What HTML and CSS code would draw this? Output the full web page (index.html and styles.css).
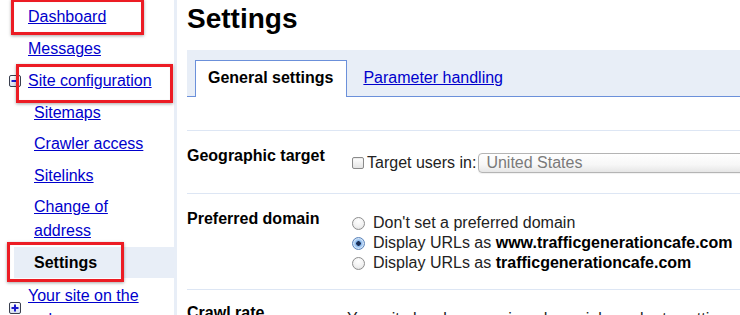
FILE: index.html
```html
<!DOCTYPE html>
<html lang="en">
<head>
<meta charset="utf-8">
<title>Settings</title>
<link rel="stylesheet" href="styles.css">
</head>
<body>
<div class="page">
  <nav class="sidebar">
    <ul class="nav">
      <li class="nav-item"><a href="#">Dashboard</a></li>
      <li class="nav-item"><a href="#">Messages</a></li>
      <li class="nav-group group-config">
        <div class="nav-item has-toggle">
          <span class="toggle">
            <svg width="12" height="12" viewBox="0 0 12 12">
              <defs><linearGradient id="tg1" x1="0" y1="0" x2="0" y2="1"><stop offset="0" stop-color="#ffffff"/><stop offset="1" stop-color="#d6deee"/></linearGradient></defs>
              <rect x="0.5" y="0.5" width="11" height="11" rx="1.5" fill="url(#tg1)" stroke="#3a3f4f"/>
              <rect x="2.5" y="5" width="7" height="2" fill="#1a1acc"/>
            </svg>
          </span>
          <a href="#">Site configuration</a>
        </div>
        <ul class="subnav">
          <li class="sub-item"><a href="#">Sitemaps</a></li>
          <li class="sub-item"><a href="#">Crawler access</a></li>
          <li class="sub-item"><a href="#">Sitelinks</a></li>
          <li class="sub-item"><a href="#">Change of address</a></li>
          <li class="sub-item current">Settings</li>
        </ul>
      </li>
      <li class="nav-group group-web">
        <div class="nav-item has-toggle">
          <span class="toggle">
            <svg width="12" height="12" viewBox="0 0 12 12">
              <defs><linearGradient id="tg2" x1="0" y1="0" x2="0" y2="1"><stop offset="0" stop-color="#ffffff"/><stop offset="1" stop-color="#d6deee"/></linearGradient></defs>
              <rect x="0.5" y="0.5" width="11" height="11" rx="1.5" fill="url(#tg2)" stroke="#3a3f4f"/>
              <rect x="2.5" y="5" width="7" height="2" fill="#1a1acc"/>
              <rect x="5" y="2.5" width="2" height="7" fill="#1a1acc"/>
            </svg>
          </span>
          <a href="#">Your site on the web</a>
        </div>
      </li>
    </ul>
  </nav>

  <main class="main">
    <h1 class="title">Settings</h1>
    <div class="tabs">
      <span class="tab active">General settings</span>
      <a class="tab" href="#">Parameter handling</a>
    </div>

    <div class="rows">
      <div class="row row-geo">
        <div class="label">Geographic target</div>
        <div class="value value-geo">
          <label class="check-line">
            <input type="checkbox" class="check">
            <span>Target users in:</span>
          </label>
          <span class="select">United States</span>
        </div>
      </div>

      <div class="row row-domain">
        <div class="label">Preferred domain</div>
        <div class="value value-radios">
          <label class="radio-line"><input type="radio" name="pd" class="radio"><span>Don't set a preferred domain</span></label>
          <label class="radio-line"><input type="radio" name="pd" class="radio" checked><span>Display URLs as <b>www.trafficgenerationcafe.com</b></span></label>
          <label class="radio-line"><input type="radio" name="pd" class="radio"><span>Display URLs as <b>trafficgenerationcafe.com</b></span></label>
        </div>
      </div>

      <div class="row row-crawl">
        <div class="label">Crawl rate</div>
        <div class="value value-text">Your site has been assigned special crawl rate settings. You cannot change the crawl rate.</div>
      </div>
    </div>
  </main>

  <div class="annot annot-dashboard"></div>
  <div class="annot annot-config"></div>
  <div class="annot annot-settings"></div>
</div>
</body>
</html>
```

FILE: styles.css
```css
* { box-sizing: border-box; }

html, body {
  margin: 0;
  padding: 0;
  background: #fff;
  overflow: hidden;
}

body {
  font-family: "Liberation Sans", Arial, Helvetica, sans-serif;
  color: #000;
}

.page {
  position: relative;
  display: flex;
  width: 740px;
  height: 315px;
  overflow: hidden;
}

/* ---------- Sidebar ---------- */
.sidebar {
  flex: 0 0 177px;
  border-right: 3px solid #e8eef7;
  padding-top: 1px;
  font-size: 16px;
}

.nav, .subnav {
  list-style: none;
  margin: 0;
  padding: 0;
}

.nav a {
  color: #0000cc;
  text-decoration: underline;
}

.nav-item {
  padding: 4px 20px 3.5px 28px;
  line-height: 24px;
}

.nav-item.has-toggle {
  display: flex;
  align-items: center;
  padding-left: 9px;
}

.toggle {
  flex: 0 0 12px;
  width: 12px;
  height: 12px;
  margin-right: 7px;
  display: block;
}
.toggle svg { display: block; }

.group-config { margin-top: 1px; }
.group-web { margin-top: 2px; }

.subnav { margin-left: 14px; }

.sub-item {
  padding: 4px 20px 3.5px 20px;
  line-height: 24px;
}

.sub-item.current {
  background: #e8eef7;
  font-weight: bold;
  color: #000;
}

/* ---------- Main ---------- */
.main {
  flex: 1 1 auto;
  min-width: 0;
  padding-left: 10px;
}

.title {
  margin: 0;
  padding-top: 3px;
  height: 50px;
  font-size: 28px;
  line-height: 32px;
  font-weight: bold;
  color: #000;
}

.tabs {
  display: flex;
  align-items: flex-end;
  height: 47px;
  background: #e8eef7;
  border-bottom: 1px solid #6b90da;
  padding-left: 8px;
  font-size: 16px;
}

.tab {
  height: 37px;
  padding: 8px 13px 0 12px;
  line-height: 18px;
  margin-bottom: -1px;
  white-space: nowrap;
}

.tab.active {
  background: #fff;
  border: 1px solid #6b90da;
  border-bottom: none;
  font-weight: bold;
  color: #000;
}

a.tab {
  color: #0000cc;
  text-decoration: underline;
  padding-left: 16px;
  padding-top: 9px;
}

.rows {
  margin-top: 33px;
  font-size: 16px;
}

.row {
  display: grid;
  grid-template-columns: 160px 1fr;
  border-top: 1px solid #dde6f4;
  padding: 16px 0 16px;
}

.row-geo { padding-bottom: 20px; }
.row-crawl { padding-top: 14px; }

.label {
  font-weight: bold;
  line-height: 18px;
  color: #000;
  white-space: nowrap;
}

.value {
  line-height: 20px;
  color: #222;
  white-space: nowrap;
}

.value-geo {
  display: flex;
  align-items: center;
  margin-top: 6px;
}

.check-line {
  display: flex;
  align-items: center;
}

.check {
  appearance: none;
  -webkit-appearance: none;
  width: 12px;
  height: 12px;
  margin: 0 3px 0 5px;
  border: 1px solid #8a8a8a;
  border-radius: 2px;
  background: linear-gradient(#ffffff, #e4e4e4);
  box-shadow: inset 0 1px 1px rgba(0,0,0,0.08);
}

.select {
  display: block;
  width: 270px;
  height: 20px;
  margin-left: 2px;
  padding-left: 7px;
  line-height: 18px;
  color: #7a7a7a;
  border: 1px solid #b4b4b4;
  border-radius: 4px;
  background: linear-gradient(#ffffff 0%, #f7f7f7 60%, #e6e6e6 100%);
  box-shadow: 0 1px 1px rgba(0,0,0,0.06);
}

.value-radios {
  margin-top: 3px;
  display: flex;
  flex-direction: column;
}

.radio-line {
  display: flex;
  align-items: center;
  height: 20px;
}

.radio-line b { color: #000; }

.radio {
  appearance: none;
  -webkit-appearance: none;
  width: 13px;
  height: 13px;
  margin: 0 8px 0 5px;
  border: 1px solid #8e8e8e;
  border-radius: 50%;
  background: radial-gradient(circle at 50% 30%, #ffffff 0%, #f0f0f0 60%, #d8d8d8 100%);
}

.radio:checked {
  border-color: #5b82b8;
  background: radial-gradient(circle, #1b2f57 0, #1b2f57 2px, #7fb1ea 2.5px, #cfe3f8 5px, #a8c8ee 100%);
}

.value-text {
  margin-top: 5px;
}

/* ---------- Annotation boxes ---------- */
.annot {
  position: absolute;
  border: 3px solid #ec1c24;
  box-shadow: 0 1px 3px rgba(0,0,0,0.35), inset 0 0 1px rgba(0,0,0,0.15);
  pointer-events: none;
}

.annot-dashboard { left: 11px; top: -1px; width: 133px; height: 36px; }
.annot-config    { left: 16px; top: 64px; width: 157px; height: 39px; }
.annot-settings  { left: 7px;  top: 242px; width: 117px; height: 40px; }
```
